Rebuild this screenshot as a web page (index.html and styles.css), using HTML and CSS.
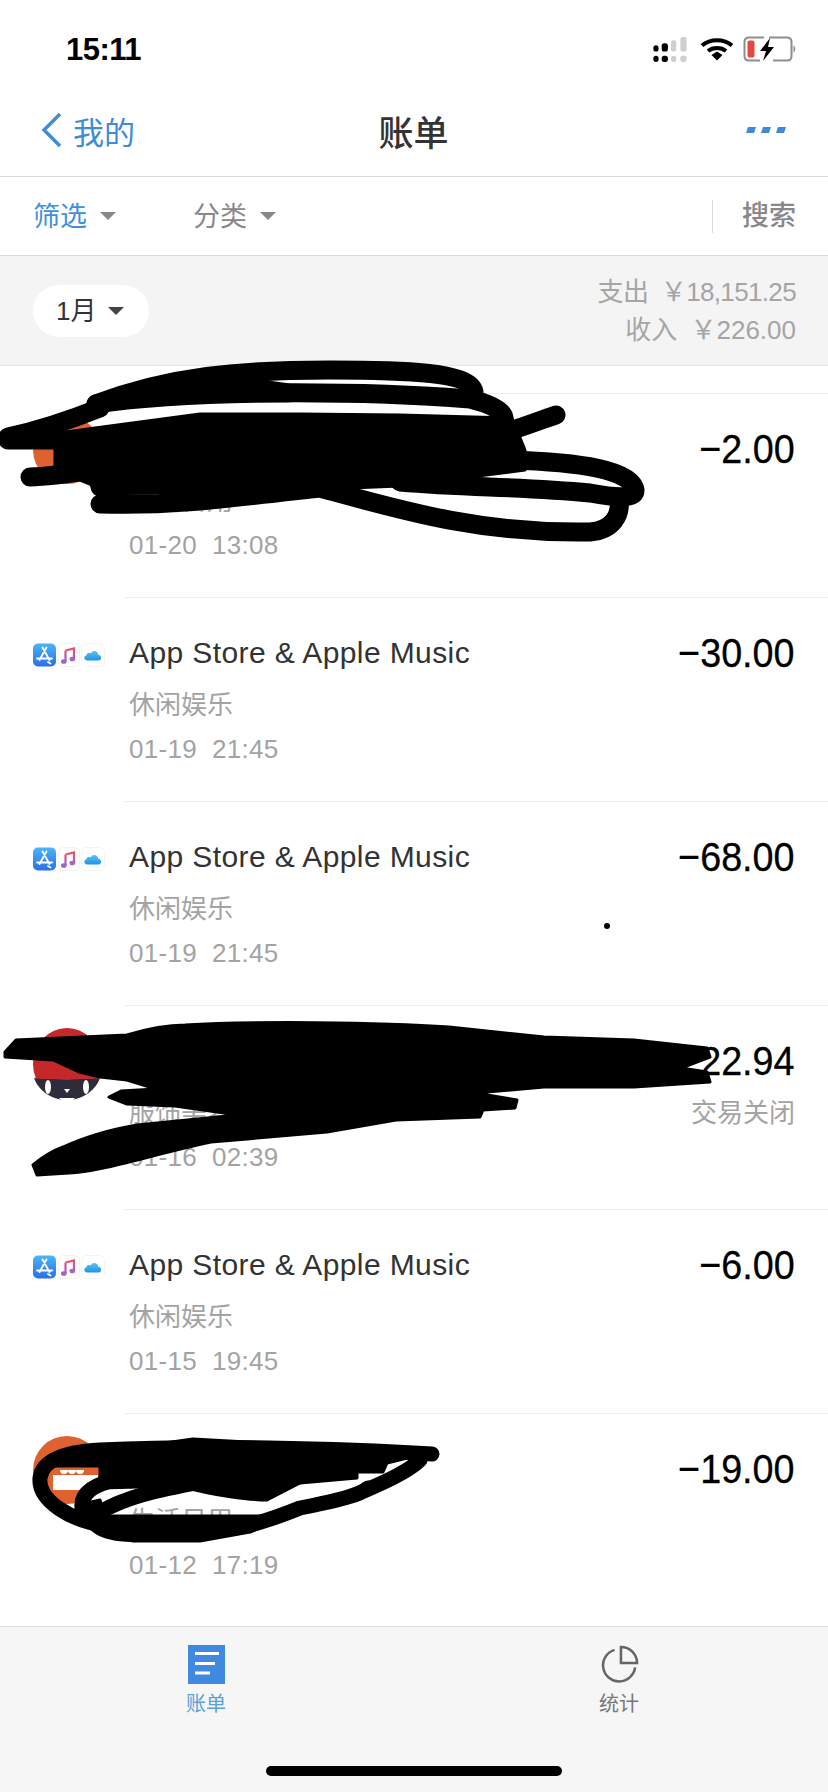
FILE: index.html
```html
<!DOCTYPE html>
<html lang="zh-CN">
<head>
    <meta charset="UTF-8">
    <meta name="viewport" content="width=device-width, initial-scale=1.0">
    <title>账单</title>
    <link rel="stylesheet" href="styles.css">
</head>
<body>
    <!-- shared icons -->
    <svg class="defs" width="0" height="0">
        <defs>
            <linearGradient id="storeBlue" x1="0" y1="0" x2="0" y2="1">
                <stop offset="0" stop-color="#4cb4f7"/>
                <stop offset="1" stop-color="#2a6fe6"/>
            </linearGradient>
            <linearGradient id="notePink" x1="0" y1="0" x2="0" y2="1">
                <stop offset="0" stop-color="#f2506c"/>
                <stop offset="1" stop-color="#8a63d8"/>
            </linearGradient>
            <linearGradient id="cloudBlue" x1="0" y1="0" x2="0" y2="1">
                <stop offset="0" stop-color="#58c2f5"/>
                <stop offset="1" stop-color="#1f93e8"/>
            </linearGradient>
            <symbol id="appIcons" viewBox="0 0 72 24">
                <rect x="0" y="0.5" width="23" height="23" rx="5" fill="url(#storeBlue)"/>
                <path d="M13.5 4.5 L6.5 17 M9.5 4.5 L16.5 17 M4 15.5 H19 M15 19 L17.5 20.5" fill="none" stroke="#fff" stroke-width="1.8" stroke-linecap="round"/>
                <rect x="25.5" y="0.5" width="21" height="23" rx="5" fill="#fff" stroke="#f1f1f1"/>
                <path d="M32.5 7.5 L41 5.5 V16 M32.5 7.5 V18.5" fill="none" stroke="url(#notePink)" stroke-width="2.2"/>
                <ellipse cx="30.8" cy="18.5" rx="2.8" ry="2.3" fill="#9a62d2"/>
                <ellipse cx="39.3" cy="16" rx="2.8" ry="2.3" fill="#a862cc"/>
                <rect x="48.5" y="0.5" width="23" height="23" rx="5" fill="#fff" stroke="#f4f4f4"/>
                <path d="M54.5 17.5 C51 17.5 50 13 53.5 12.2 C53.8 9.8 56.5 9.2 57.8 10.4 C59.4 6.6 65.2 7.6 65.2 11.8 C69 12 69.2 17.5 65.5 17.5 Z" fill="url(#cloudBlue)"/>
            </symbol>
        </defs>
    </svg>

    <div class="phone">
        <div class="status-bar">
            <span class="clock">15:11</span>
            <div class="status-icons">
                <svg class="signal" width="36" height="27" viewBox="0 0 34 26">
                    <rect x="1" y="9" width="5" height="6" rx="2.5" fill="#000"/>
                    <rect x="9" y="7" width="6" height="8" rx="2.5" fill="#000"/>
                    <rect x="18" y="4" width="5" height="11" rx="2" fill="#cfcfcf"/>
                    <rect x="27" y="1" width="6" height="14" rx="2" fill="#cfcfcf"/>
                    <rect x="1" y="19" width="5" height="6" rx="2.5" fill="#000"/>
                    <rect x="9" y="19" width="6" height="6" rx="2.5" fill="#000"/>
                    <rect x="18" y="19" width="5" height="6" rx="2" fill="#cfcfcf"/>
                    <rect x="27" y="19" width="6" height="6" rx="2" fill="#cfcfcf"/>
                </svg>
                <svg class="wifi" width="34" height="24" viewBox="0 0 34 24">
                    <path d="M2 8.5 C10 1.5 24 1.5 32 8.5" fill="none" stroke="#000" stroke-width="4"/>
                    <path d="M8 14 C13 10 21 10 26 14" fill="none" stroke="#000" stroke-width="4"/>
                    <path d="M11.5 18 L17 14.5 L22.5 18 L17 23.5 Z" fill="#000"/>
                </svg>
                <svg class="battery" width="54" height="26" viewBox="0 0 54 26">
                    <path d="M21 1.5 H6 Q1.5 1.5 1.5 6 V20 Q1.5 24.5 6 24.5 H17 M30 24.5 H44 Q48.5 24.5 48.5 20 V6 Q48.5 1.5 44 1.5 H26" fill="none" stroke="#8e8e8e" stroke-width="2"/>
                    <rect x="4.5" y="4.5" width="7" height="17" rx="2" fill="#e5483f"/>
                    <path d="M27 2 L17 15 H23 L20 25 L31 11 H25 Z" fill="#000"/>
                    <path d="M50.5 9 Q54 13 50.5 17 Z" fill="#8e8e8e"/>
                </svg>
            </div>
        </div>

        <div class="nav-bar">
            <div class="nav-back">
                <svg width="24" height="36" viewBox="0 0 24 36">
                    <path d="M20 2 L4 18 L20 34" fill="none" stroke="#3f8bd8" stroke-width="3.4"/>
                </svg>
                <span>我的</span>
            </div>
            <h1 class="nav-title">账单</h1>
            <svg class="nav-more" width="42" height="8" viewBox="0 0 42 8">
                <path d="M3 1 H11 L9 7 H1 Z M18 1 H26 L24 7 H16 Z M33 1 H41 L39 7 H31 Z" fill="#3f8bd8"/>
            </svg>
        </div>

        <div class="filter-bar">
            <div class="filter filter-active">筛选<i class="caret"></i></div>
            <div class="filter">分类<i class="caret"></i></div>
            <div class="filter-search">搜索</div>
        </div>

        <div class="month-bar">
            <div class="month-pill">1月<i class="caret caret-dark"></i></div>
            <div class="month-sum">
                <div class="sum-tight">支出 ￥18,151.25</div>
                <div>收入 ￥226.00</div>
            </div>
        </div>

        <div class="bill-list">
            <div class="bill-row">
                <div class="bill-icon">
                    <svg class="avatar" width="68" height="68" viewBox="0 0 68 68"><circle cx="34" cy="34" r="34" fill="#de6230"/></svg>
                </div>
                <div class="bill-main">
                    <div class="bill-title"></div>
                    <div class="bill-sub">生活日用</div>
                    <div class="bill-date">01-20  13:08</div>
                </div>
                <div class="bill-side"><div class="bill-amount">−2.00</div></div>
            </div>

            <div class="bill-row">
                <div class="bill-icon"><svg class="app-icons" width="72" height="24"><use href="#appIcons"/></svg></div>
                <div class="bill-main">
                    <div class="bill-title">App Store &amp; Apple Music</div>
                    <div class="bill-sub">休闲娱乐</div>
                    <div class="bill-date">01-19  21:45</div>
                </div>
                <div class="bill-side"><div class="bill-amount">−30.00</div></div>
            </div>

            <div class="bill-row">
                <div class="bill-icon"><svg class="app-icons" width="72" height="24"><use href="#appIcons"/></svg></div>
                <div class="bill-main">
                    <div class="bill-title">App Store &amp; Apple Music</div>
                    <div class="bill-sub">休闲娱乐</div>
                    <div class="bill-date">01-19  21:45</div>
                </div>
                <div class="bill-side"><div class="bill-amount">−68.00</div></div>
            </div>

            <div class="bill-row">
                <div class="bill-icon">
                    <svg class="avatar" width="68" height="72" viewBox="0 0 68 72">
                        <ellipse cx="34" cy="36" rx="34" ry="36" fill="#c4282b"/>
                        <path d="M1 50 C10 52 20 50 34 52 C48 50 58 52 67 50 C62 64 48 72 34 72 C20 72 6 64 1 50 Z" fill="#2e2b3a"/>
                        <ellipse cx="15" cy="59" rx="3" ry="7" fill="#fff"/>
                        <ellipse cx="53" cy="59" rx="3" ry="7" fill="#fff"/>
                        <path d="M31 61 H37 L34 65 Z M26 70 H42 L40 72 H28 Z" fill="#fff"/>
                    </svg>
                </div>
                <div class="bill-main">
                    <div class="bill-title"></div>
                    <div class="bill-sub">服饰美容</div>
                    <div class="bill-date">01-16  02:39</div>
                </div>
                <div class="bill-side">
                    <div class="bill-amount">−22.94</div>
                    <div class="bill-state">交易关闭</div>
                </div>
            </div>

            <div class="bill-row">
                <div class="bill-icon"><svg class="app-icons" width="72" height="24"><use href="#appIcons"/></svg></div>
                <div class="bill-main">
                    <div class="bill-title">App Store &amp; Apple Music</div>
                    <div class="bill-sub">休闲娱乐</div>
                    <div class="bill-date">01-15  19:45</div>
                </div>
                <div class="bill-side"><div class="bill-amount">−6.00</div></div>
            </div>

            <div class="bill-row">
                <div class="bill-icon">
                    <svg class="avatar" width="68" height="68" viewBox="0 0 68 68">
                        <circle cx="34" cy="34" r="34" fill="#de6230"/>
                        <rect x="20" y="18" width="30" height="7" fill="#fff"/>
                        <path d="M27 34 a4 4 0 0 0 8 0 a4 4 0 0 0 8 0 a4 4 0 0 0 8 0 Z" fill="#fff"/>
                        <rect x="20" y="39" width="45" height="15" fill="#fff"/>
                    </svg>
                </div>
                <div class="bill-main">
                    <div class="bill-title"></div>
                    <div class="bill-sub">生活日用</div>
                    <div class="bill-date">01-12  17:19</div>
                </div>
                <div class="bill-side"><div class="bill-amount">−19.00</div></div>
            </div>
        </div>

        <div class="tab-bar">
            <div class="tab tab-active">
                <svg width="37" height="39" viewBox="0 0 37 39">
                    <rect width="37" height="39" fill="#3f8ae0"/>
                    <path d="M7 8.5 H31 M7 18.5 H27 M7 28 H22" stroke="#fff" stroke-width="3" fill="none"/>
                </svg>
                <span>账单</span>
            </div>
            <div class="tab">
                <svg width="39" height="39" viewBox="0 0 40 40">
                    <path d="M15 5 A16.5 16.5 0 1 0 36 23" fill="none" stroke="#666" stroke-width="2.6"/>
                    <path d="M21.5 2 A16.5 16.5 0 0 1 38 18.5 H21.5 Z" fill="none" stroke="#666" stroke-width="2.6"/>
                </svg>
                <span>统计</span>
            </div>
        </div>

        <div class="home-indicator"></div>

        <!-- hand drawn marks over the list -->
        <svg class="scribbles" width="828" height="1792" viewBox="0 0 828 1792">
            <g class="scribble-line">
                <path d="M96 404 C170 376 240 370 330 370 C400 370 470 371 474 392"/>
                <path d="M96 404 C200 388 380 392 470 399 C515 410 512 425 480 435"/>
                <path d="M8 437 C40 430 70 420 100 408"/>
                <path d="M8 440 C30 440 60 440 100 440"/>
                <path d="M480 440 C510 432 535 422 556 415"/>
                <path d="M510 460 C580 462 632 470 635 490 C635 500 612 497 590 493 C520 486 470 488 400 482"/>
                <path d="M30 477 C60 476 90 470 130 465"/>
                <path d="M100 487 C200 480 300 472 380 475"/>
                <path d="M100 504 C170 506 215 500 320 488 C400 510 480 534 590 532 C613 530 621 515 619 500"/>
            </g>
            <path class="scribble-fill" d="M100 404 L170 378 L240 378 L340 392 L200 396 Z"/>
            <path class="scribble-fill" d="M52 434 L95 428 L200 414 L300 414 L400 415 L512 418 L525 450 L525 470 L400 486 L300 490 L100 494 L90 484 L55 470 L55 448 Z"/>

            <circle cx="607" cy="926" r="3"/>

            <path class="scribble-fill" d="M5 1052 L16 1040 L127 1035 C150 1028 170 1025 185 1025 C250 1021 380 1022 449 1027 L544 1037 L634 1040 L707 1048 L710 1057 L681 1068 L707 1072 L710 1082 L634 1087 L544 1087 L475 1093 L517 1100 L515 1108 L483 1110 L480 1117 L396 1120 L327 1132 L211 1142 C150 1155 100 1172 69 1173 L37 1175 L33 1165 C45 1155 55 1150 63 1147 C90 1135 110 1130 137 1125 L238 1115 L175 1106 L127 1104 L109 1097 L121 1091 L156 1089 L127 1080 L100 1077 L79 1072 L53 1060 L5 1057 Z"/>

            <g class="scribble-line scribble-thin">
                <path d="M432 1454 C340 1448 200 1445 100 1450 C60 1452 42 1462 40 1478 C38 1500 70 1522 110 1526"/>
                <path d="M82 1508 C80 1490 100 1482 125 1478 M92 1512 C90 1540 140 1535 180 1533 C240 1532 270 1520 300 1508 C340 1500 360 1495 368 1488"/>
                <path d="M100 1512 C130 1495 160 1490 200 1482 M366 1490 C390 1480 410 1470 420 1460"/>
            </g>
            <path class="scribble-fill" d="M52 1459 L100 1456 L100 1466 L52 1466 Z"/>
            <path class="scribble-fill" d="M100 1452 L193 1439 L432 1452 L387 1463 L383 1472 L357 1472 L357 1478 L300 1483 L178 1486 L100 1488 Z"/>
            <path class="scribble-fill" d="M180 1486 C215 1496 250 1500 267 1500 L300 1483 Z"/>
            <path class="scribble-fill" d="M78 1505 L100 1500 L105 1516 L290 1516 L250 1532 L200 1541 L133 1541 L100 1532 Z"/>
        </svg>
    </div>
</body>
</html>
```

FILE: styles.css
```css
* {
    box-sizing: border-box;
}
body {
    margin: 0;
    font-family: "Liberation Sans", "Noto Sans CJK SC", sans-serif;
    background-color: #fff;
}
.defs {
    position: absolute;
}
.phone {
    position: relative;
    display: flex;
    flex-direction: column;
    width: 828px;
    height: 1792px;
    overflow: hidden;
    background-color: #fff;
}

/* status bar */
.status-bar {
    display: flex;
    justify-content: space-between;
    align-items: center;
    height: 98px;
    padding: 0 31px 0 66px;
}
.clock {
    font-family: "Liberation Sans", sans-serif;
    font-size: 31px;
    font-weight: bold;
    color: #000;
    letter-spacing: -0.5px;
    padding-top: 2px;
}
.status-icons {
    display: flex;
    align-items: center;
    gap: 11px;
}
.wifi {
    margin-left: 1px;
}
.battery {
    margin-left: -2px;
}

/* nav */
.nav-bar {
    display: flex;
    justify-content: space-between;
    align-items: center;
    height: 79px;
    padding: 0 41px 14px 40px;
    border-bottom: 1px solid #dcdcdc;
}
.nav-back {
    display: flex;
    align-items: center;
    gap: 9px;
    width: 200px;
    font-size: 31px;
    color: #3f8bd8;
}
.nav-title {
    margin: 0;
    font-size: 35px;
    font-weight: 500;
    color: #333;
}
.nav-more {
    margin-left: 158px;
}

/* filter row */
.filter-bar {
    display: flex;
    align-items: center;
    height: 79px;
    padding: 0 32px 0 33px;
    border-bottom: 1px solid #dcdcdc;
}
.filter {
    display: flex;
    align-items: center;
    gap: 13px;
    width: 160px;
    padding-bottom: 4px;
    font-size: 27px;
    color: #888;
}
.filter-active {
    color: #3f8fdc;
}
.caret {
    display: inline-block;
    width: 0;
    height: 0;
    margin-top: 4px;
    border-left: 8px solid transparent;
    border-right: 8px solid transparent;
    border-top: 8px solid #888;
}
.caret-dark {
    border-top-color: #444;
}
.filter-search {
    margin-left: auto;
    padding-left: 29px;
    border-left: 1px solid #dcdcdc;
    font-size: 27px;
    font-weight: 500;
    line-height: 33px;
    color: #888;
}

/* month summary */
.month-bar {
    display: flex;
    justify-content: space-between;
    align-items: center;
    height: 110px;
    padding: 0 32px 0 33px;
    background-color: #f4f4f4;
    border-bottom: 1px solid #e6e6e6;
}
.month-pill {
    display: flex;
    align-items: center;
    gap: 12px;
    width: 116px;
    height: 52px;
    padding-left: 23px;
    padding-bottom: 4px;
    border-radius: 26px;
    background-color: #fff;
    font-size: 26px;
    color: #333;
}
.month-sum {
    font-size: 26px;
    line-height: 38px;
    word-spacing: 6px;
    color: #a5a5a5;
    text-align: right;
}
.sum-tight {
    letter-spacing: -0.65px;
}

/* bills */
.bill-list {
    flex: 1;
    padding-top: 27px;
}
.bill-row {
    display: flex;
    height: 204px;
    padding: 22px 33px 0 33px;
    position: relative;
    border-top: 1px solid #ededed;
    border-image: linear-gradient(to right, transparent 125px, #ededed 125px) 1;
}
.bill-icon {
    width: 96px;
    flex: none;
}
.avatar {
    display: block;
}
.app-icons {
    display: block;
    margin-top: 23px;
}
.bill-main {
    flex: 1;
    padding-top: 14px;
}
.bill-title {
    height: 38px;
    font-size: 30px;
    line-height: 38px;
    letter-spacing: 0.4px;
    color: #333;
}
.bill-sub {
    margin-top: 14px;
    font-size: 26px;
    line-height: 38px;
    color: #a3a3a3;
}
.bill-date {
    margin-top: 6px;
    font-size: 26px;
    line-height: 38px;
    letter-spacing: 0.3px;
    color: #a3a3a3;
    white-space: pre;
}
.bill-side {
    padding-top: 9px;
    text-align: right;
}
/* the digits in the app are narrow, no condensed family here */
.bill-amount {
    font-size: 41px;
    line-height: 48px;
    color: #000;
    -webkit-text-stroke: 0.3px #000;
    transform: scaleX(0.92);
    transform-origin: right center;
}
.bill-state {
    margin-top: 10px;
    font-size: 26px;
    line-height: 36px;
    color: #a3a3a3;
}

/* tabs */
.tab-bar {
    display: flex;
    justify-content: space-between;
    height: 166px;
    padding: 18px 189px 0 186px;
    background-color: #f6f6f6;
    border-top: 1px solid #dedede;
}
.tab {
    display: flex;
    flex-direction: column;
    align-items: center;
    gap: 4px;
    width: 40px;
    font-size: 20px;
    color: #777;
}
.tab-active {
    color: #5b9fd8;
}
.home-indicator {
    position: absolute;
    left: 266px;
    bottom: 16px;
    width: 296px;
    height: 10px;
    border-radius: 5px;
    background-color: #000;
}

/* marker scribbles drawn on top of the screenshot */
.scribbles {
    position: absolute;
    top: 0;
    left: 0;
    pointer-events: none;
}
.scribble-line path {
    fill: none;
    stroke: #000;
    stroke-width: 19;
    stroke-linecap: round;
    stroke-linejoin: round;
}
.scribble-thin path {
    stroke-width: 15;
}
.scribble-fill {
    fill: #000;
    stroke: #000;
    stroke-width: 3;
    stroke-linejoin: round;
}
```
